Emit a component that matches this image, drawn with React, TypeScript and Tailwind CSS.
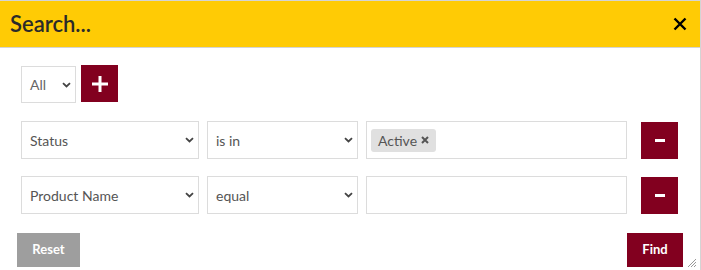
import { ReactNode } from "react";

function Chevron() {
  return (
    <svg width="9" height="6" viewBox="0 0 9 6" className="shrink-0">
      <path d="M1 1.2 L4.5 4.5 L8 1.2" fill="none" stroke="#444" strokeWidth="1.8" />
    </svg>
  );
}

function Select({ label, width }: { label: string; width: string }) {
  return (
    <div
      className={`${width} h-[38px] border border-[#dcdcdc] bg-white flex items-center justify-between pl-[8px] pr-[4px] text-[14px] text-[#555]`}
    >
      <span>{label}</span>
      <Chevron />
    </div>
  );
}

function SquareButton({ children }: { children: ReactNode }) {
  return (
    <div className="w-[37px] h-[37px] bg-[#82001f] flex items-center justify-center">
      {children}
    </div>
  );
}

function Minus() {
  return (
    <SquareButton>
      <div className="w-[10px] h-[3px] bg-white" />
    </SquareButton>
  );
}

function ConditionRow({ field, op, children }: { field: string; op: string; children?: ReactNode }) {
  return (
    <div className="flex items-center">
      <Select label={field} width="w-[178px]" />
      <div className="ml-[8px]">
        <Select label={op} width="w-[151px]" />
      </div>
      <div className="ml-[8px] w-[261px] h-[38px] border border-[#dcdcdc] bg-white flex items-center px-[4px]">
        {children}
      </div>
      <div className="ml-[14px]">
        <Minus />
      </div>
    </div>
  );
}

export default function App() {
  return (
    <div
      className="w-[701px] h-[270px] bg-white border-t border-r border-[#d4d4d4] overflow-hidden relative"
      style={{ fontFamily: "Lato, 'Open Sans', sans-serif" }}
    >
      {/* header */}
      <div className="h-[47px] bg-[#ffcb05] border-b border-[#d4d4d4] flex items-center justify-between pl-[10px] pr-[13px]">
        <h1 className="text-[22px] font-semibold text-[#2a2a2a] leading-none">Search...</h1>
        <svg width="14" height="14" viewBox="0 0 14 14">
          <path d="M1.5 1.5 L12.5 12.5 M12.5 1.5 L1.5 12.5" stroke="#000" strokeWidth="2.4" />
        </svg>
      </div>

      {/* body */}
      <div className="pl-[21px] pr-[22px] pt-[17px]">
        <div className="flex items-start gap-[5px]">
          <div className="mt-[1px] w-[55px] h-[37px] border border-[#dcdcdc] flex items-center justify-between pl-[8px] pr-[4px] text-[14px] text-[#666]">
            <span>All</span>
            <Chevron />
          </div>
          <SquareButton>
            <svg width="18" height="18" viewBox="0 0 18 18">
              <path d="M9 1 V17 M1 9 H17" stroke="#fff" strokeWidth="3" />
            </svg>
          </SquareButton>
        </div>

        <div className="mt-[18px] flex flex-col gap-[17px]">
          <ConditionRow field="Status" op="is in">
            <span className="h-[23px] rounded-[3px] bg-[#e0e0e0] flex items-center pl-[7px] pr-[7px] gap-[4px] text-[14px] text-[#555]">
              Active
              <svg width="8" height="8" viewBox="0 0 8 8">
                <path d="M1 1 L7 7 M7 1 L1 7" stroke="#555" strokeWidth="2" />
              </svg>
            </span>
          </ConditionRow>
          <ConditionRow field="Product Name" op="equal" />
        </div>
      </div>

      {/* footer */}
      <div className="mt-[19px] pl-[17px] pr-[17px] flex justify-between">
        <div className="w-[63px] h-[34px] bg-[#9e9e9e] text-white text-[13px] font-bold flex items-center justify-center">
          Reset
        </div>
        <div className="w-[56px] h-[34px] bg-[#82001f] text-white text-[13px] font-bold flex items-center justify-center">
          Find
        </div>
      </div>

      <svg width="10" height="10" viewBox="0 0 10 10" className="absolute right-[3px] bottom-[2px]">
        <path d="M9 1 L1 9 M9 4 L4 9 M9 7 L7 9" stroke="#999" strokeWidth="1" />
      </svg>
    </div>
  );
}
